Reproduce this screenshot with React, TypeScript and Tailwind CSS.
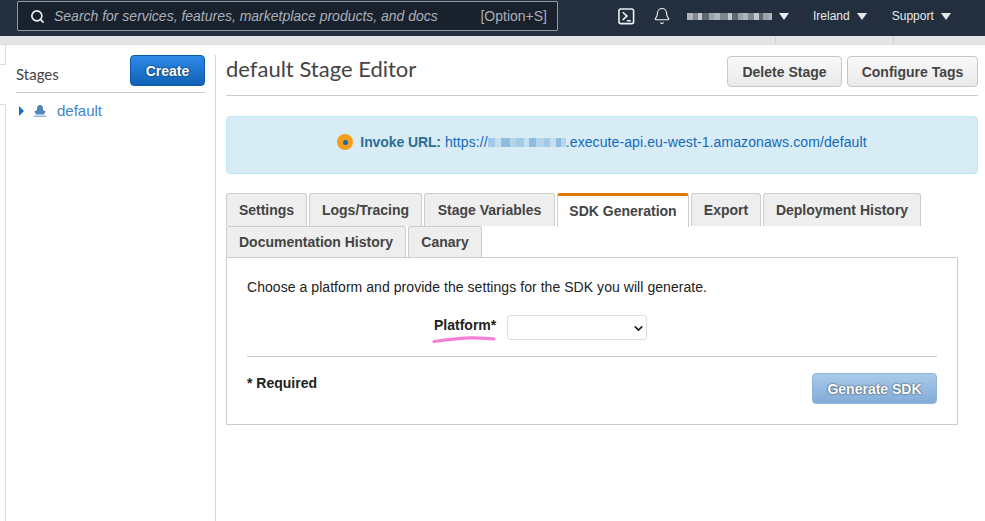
import { Bell, ChevronDown, Search } from "lucide-react";

const sans = "font-['Liberation_Sans',Arial,sans-serif]";

function Caret() {
  return <span className="ml-[7px] h-0 w-0 border-x-[5px] border-t-[7px] border-x-transparent border-t-[#e6e9ec]" />;
}

// blocks standing in for the pixelated account name / api id
function Redacted({ widths, tones, h }: { widths: number[]; tones: string[]; h: string }) {
  return (
    <span className={`inline-flex items-center blur-[0.7px] ${h}`}>
      {widths.map((w, i) => (
        <span key={i} className="h-full" style={{ width: w, backgroundColor: tones[i % tones.length] }} />
      ))}
    </span>
  );
}

function Tab({ label, className = "" }: { label: string; className?: string }) {
  return (
    <div className={`flex h-[33px] items-center justify-center rounded-t-[3px] border border-b-0 border-[#ccc] bg-[#eeeeee] text-[14px] font-bold text-[#444] ${className}`}>
      {label}
    </div>
  );
}

function GreyButton({ label, w }: { label: string; w: string }) {
  return (
    <button className={`h-[31px] ${w} rounded-[4px] border border-[#c6c6c6] bg-gradient-to-b from-[#f9f9f9] to-[#e9e9e9] pt-[1px] text-[14px] font-bold text-[#444]`}>
      {label}
    </button>
  );
}

export default function App() {
  return (
    <div className={`${sans} flex h-[521px] w-[985px] flex-col overflow-hidden bg-white`}>
      <header className="flex h-[36px] shrink-0 items-center bg-[#232f3e] pb-[4px] pl-[17px] text-[12px] text-[#e6e9ec]">
        <div className="flex h-[30px] w-[541px] items-center rounded-[1px] border border-[#8d9aa8] bg-[#19212d] pl-[12px] pr-[10px] text-[#a9b0b8]">
          <Search size={15} strokeWidth={2.6} className="text-[#eef0f2]" />
          <span className="ml-[9px] text-[14px] italic tracking-[-0.01px]">Search for services, features, marketplace products, and docs</span>
          <span className="ml-auto text-[14px]">[Option+S]</span>
        </div>
        <svg viewBox="0 0 18 18" className="ml-[60px] h-[17px] w-[17px]" fill="none" stroke="#eef0f2" strokeWidth="1.7">
          <rect x="1" y="1" width="15.5" height="15.5" rx="2" />
          <path d="M5 4.5 9.500 8.500 5 12.500M9.500 13.500h4" />
        </svg>
        <Bell size={18} strokeWidth={1.5} className="ml-[18px] text-[#eef0f2]" />
        <span className="ml-[16px] flex items-center">
          <Redacted
            h="h-[7px]"
            widths={[6, 5, 4, 7, 5, 6, 8, 4, 6, 5, 5, 6, 5, 4, 6, 3]}
            tones={["#aeb4bb", "#7d8792", "#c4c8cc", "#5d6875", "#9aa2aa"]}
          />
          <Caret />
        </span>
        <span className="ml-[24px] flex items-center">Ireland<Caret /></span>
        <span className="ml-[25px] flex items-center">Support<Caret /></span>
      </header>

      <div className="flex h-[9px] shrink-0 border-b border-[#dedede] bg-[#e4e4e4]">
        <span className="ml-[775px] h-full w-px bg-[#cfcfcf]" />
        <span className="ml-[117px] h-full w-px bg-[#cfcfcf]" />
      </div>

      <div className="flex min-h-0 flex-1">
        <div className="flex w-[6px] shrink-0 flex-col">
          <div className="h-[20px] border-b border-r border-[#ddd]" />
          <div className="mt-[39px] flex-1 border-r border-t border-[#ddd]" />
        </div>

        <aside className="ml-[10px] w-[189px] shrink-0 pt-[10px]">
          <div className="flex h-[38px] items-end justify-between border-b border-[#ccc] pb-[6px]">
            <span className="mb-[1px] font-['Lato',sans-serif] text-[15px] text-[#444]">Stages</span>
            <button className="h-[31px] w-[75px] rounded-[4px] border border-[#0d5ba8] bg-gradient-to-b from-[#2e8ae8] to-[#0f62b5] pt-[1px] text-[14px] font-bold text-white [text-shadow:0_0_2px_rgba(0,0,0,0.8)]">
              Create
            </button>
          </div>
          <div className="mt-[7px] flex items-center pl-[3px] text-[15px] text-[#3f85c9]">
            <span className="h-0 w-0 border-y-[5px] border-l-[5px] border-y-transparent border-l-[#1a6fc0]" />
            <svg viewBox="0 0 14 14" className="ml-[9px] h-[14px] w-[14px]" fill="#4f86bd">
              <path d="M7 1C5 1 4 2.500 4 4.500V6L1.500 7.500 3 10.500h8l1.500-3L10 6V4.500C10 2.500 9 1 7 1z" />
              <path d="M1 11.500h12V13H1z" opacity="0.6" />
            </svg>
            <span className="ml-[10px]">default</span>
          </div>
        </aside>

        <div className="ml-[10px] mt-[10px] w-px shrink-0 bg-[#d4d4d4]" />

        <main className="ml-[10px] w-[752px] shrink-0">
          <div className="flex h-[51px] items-start justify-between border-b border-[#ccc] pt-[11px]">
            <h1 className="-mt-[1px] font-['Lato',sans-serif] text-[22px] leading-[27px] text-[#444]">default Stage Editor</h1>
            <div className="flex gap-[5px]">
              <GreyButton label="Delete Stage" w="w-[115px]" />
              <GreyButton label="Configure Tags" w="w-[131px]" />
            </div>
          </div>

          <div className="mt-[20px] flex h-[58px] items-center justify-center rounded-[4px] border border-[#bde8f3] bg-[#d8ecf5] pb-[6px] text-[14px]">
            <span className="flex h-[16px] w-[16px] items-center justify-center rounded-full bg-[#f49f1c]">
              <span className="h-[5px] w-[5px] rounded-full bg-[#1f66b3]" />
            </span>
            <span className="ml-[7px] font-bold tracking-[-0.1px] text-[#2c6e94]">Invoke URL:</span>
            <span className="ml-[4px] flex items-center tracking-[0.1px] text-[#1268bd]">
              https://
              <Redacted
                h="h-[9px]"
                widths={[7, 6, 9, 6, 8, 5, 7, 8, 6, 6, 5, 5]}
                tones={["#a3cbe6", "#c5dff0", "#8dbde0", "#b4d4ea"]}
              />
              .execute-api.eu-west-1.amazonaws.com/default
            </span>
          </div>

          <div className="mt-[19px] w-[732px]">
            <div className="flex items-end gap-x-[2px]">
              <Tab label="Settings" className="w-[81px]" />
              <Tab label="Logs/Tracing" className="w-[113px]" />
              <Tab label="Stage Variables" className="w-[131px]" />
              <div className="relative z-10 -mb-px flex h-[34px] w-[132px] items-center justify-center rounded-t-[3px] border-x border-t-[3px] border-x-[#ccc] border-t-[#dd7900] bg-white pb-[1px] text-[14px] font-bold text-[#444]">
                SDK Generation
              </div>
              <Tab label="Export" className="w-[70px]" />
              <Tab label="Deployment History" className="w-[158px]" />
            </div>
            <div className="flex gap-x-[2px]">
              <Tab label="Documentation History" className="!h-[31px] w-[180px]" />
              <Tab label="Canary" className="!h-[31px] w-[74px]" />
            </div>

            <section className="h-[168px] border border-[#ccc] px-5 pt-[20px]">
              <p className="text-[14px] leading-[18px] tracking-[0.055px] text-[#222]">Choose a platform and provide the settings for the SDK you will generate.</p>
              <div className="mt-[19px] flex h-[42px] items-start border-b border-[#ccc] pl-[187px]">
                <label className="relative mt-[1px] text-[14px] font-bold leading-[18px] text-[#222]">
                  Platform*
                  <svg viewBox="0 0 64 10" className="absolute -left-[2px] top-[18px] h-[10px] w-[64px]" fill="none">
                    <path d="M2 7.500C16 5.500 27 3.500 42 3.800 49 3.900 56 4.200 62 5" stroke="#f47fd4" strokeWidth="3.200" strokeLinecap="round" />
                  </svg>
                </label>
                <div className="ml-[11px] flex h-[25px] w-[140px] items-center justify-end rounded-[3px] border border-[#ddd] bg-white pr-[1px] pt-[2px]">
                  <ChevronDown size={13} strokeWidth={3} className="text-[#222]" />
                </div>
              </div>
              <div className="mt-[16px] flex items-start justify-between">
                <span className="mt-[1px] text-[14px] font-bold leading-[18px] text-[#222]">* Required</span>
                <button className="h-[31px] w-[125px] rounded-[4px] border border-[#8eb4dc] bg-gradient-to-b from-[#a9c9e9] to-[#82acd9] pt-[1px] text-[14px] font-bold text-white [text-shadow:0_0_2px_rgba(0,0,0,0.8)]">
                  Generate SDK
                </button>
              </div>
            </section>
          </div>
        </main>
      </div>
    </div>
  );
}
